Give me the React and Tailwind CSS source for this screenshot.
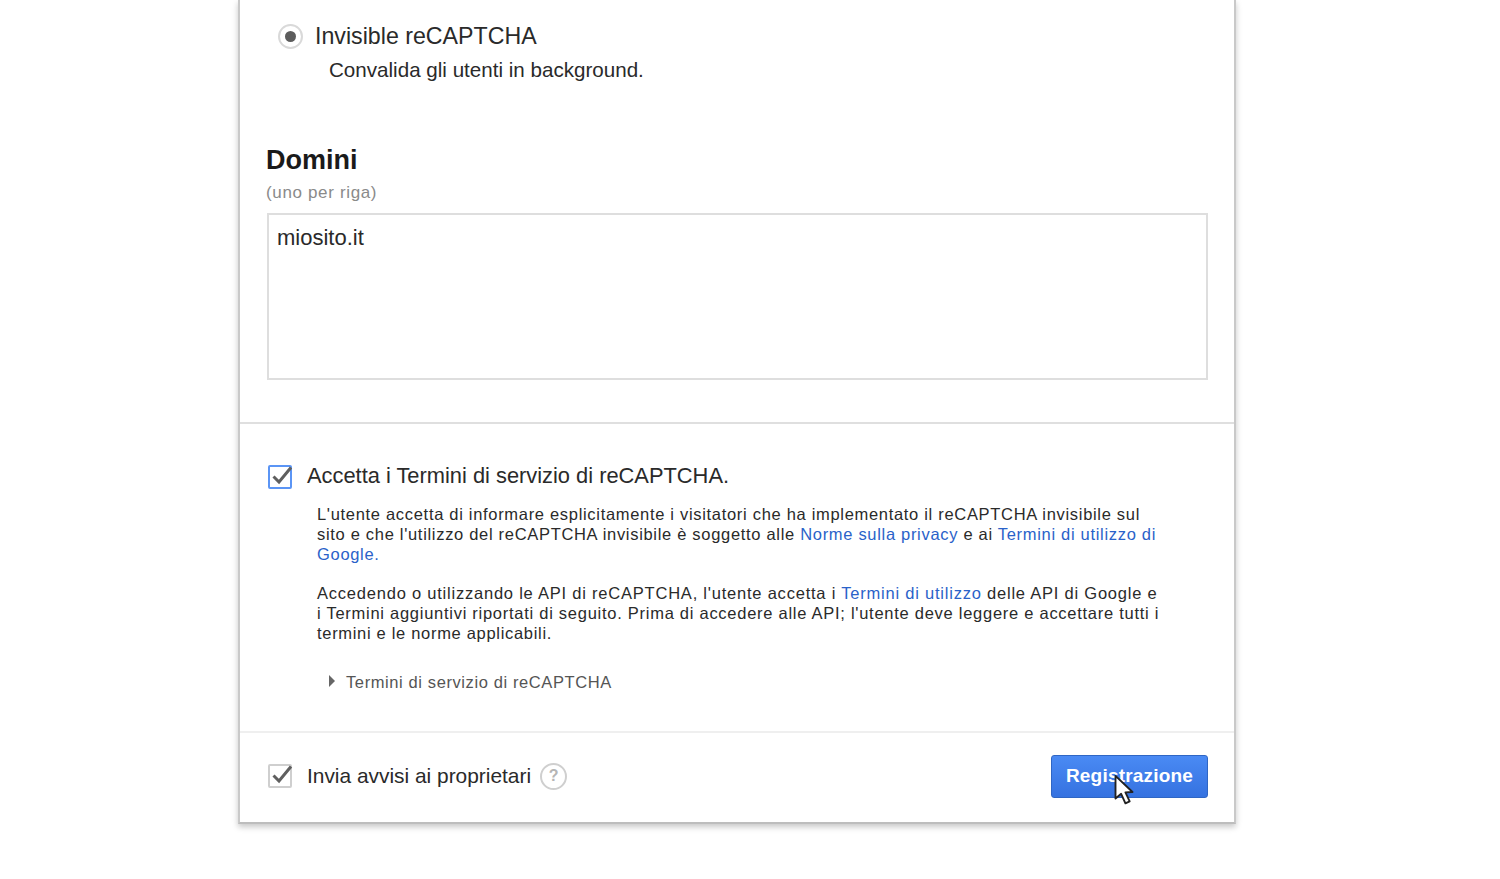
import React from 'react';

function Check({ className }) {
  return (
    <svg viewBox="0 0 24 24" className={className} fill="none">
      <path d="M4.5 12.5 L10 18 L22 3.5" stroke="#5f5f5f" strokeWidth="3" />
    </svg>
  );
}

export default function App() {
  return (
    <div className="h-[879px] overflow-hidden bg-white font-['Liberation_Sans',Arial,sans-serif] text-[#222]">
      <div className="ml-[238px] w-[998px] h-[824px] flex flex-col bg-white border-x-2 border-[#c9c9c9] border-b-2 border-b-[#bdbdbd] shadow-[0_3px_6px_rgba(0,0,0,0.22)]">
        {/* recaptcha type + domains */}
        <div className="h-[424px] shrink-0 pl-[26px] pr-[26px] pt-[21px] border-b-2 border-[#dfdfdf]">
          <div className="flex items-center h-[30px] pl-[12px]">
            <div className="w-[25px] h-[25px] rounded-full border-2 border-[#d9d9d9] flex items-center justify-center">
              <div className="w-[11px] h-[11px] rounded-full bg-[#5c5c5c]" />
            </div>
            <span className="ml-[12px] text-[23.2px] leading-[30px] text-[#2a2a2a]">Invisible reCAPTCHA</span>
          </div>
          <p className="mt-[5px] ml-[63px] text-[20.6px] leading-[28px] text-[#2a2a2a]">Convalida gli utenti in background.</p>
          <h2 className="mt-[59px] text-[27px] leading-[34px] font-bold text-[#1a1a1a]">Domini</h2>
          <p className="mt-[5px] text-[17px] leading-[22px] tracking-[0.65px] text-[#8a8a8a]">(uno per riga)</p>
          <div className="mt-[9px] ml-[1px] h-[167px] border-2 border-[#dedede] px-[8px] py-[8px] text-[22px] leading-[30px] text-[#2a2a2a]">miosito.it</div>
        </div>

        {/* terms */}
        <div className="h-[309px] shrink-0 border-b-2 border-[#efefef] pl-[28px] pr-[26px] pt-[37px]">
          <div className="flex items-center h-[30px]">
            <div className="relative w-[24px] h-[24px] mt-[2px] border-2 border-[#5b95f5] rounded-[2px]">
              <Check className="absolute left-[-1px] top-[-3px] w-[24px] h-[24px]" />
            </div>
            <span className="ml-[15px] text-[21.85px] leading-[30px] text-[#2a2a2a]">Accetta i Termini di servizio di reCAPTCHA.</span>
          </div>
          <div className="ml-[49px] mt-[13px] text-[16.5px] leading-[20.2px] tracking-[0.69px] text-[#2a2a2a] whitespace-nowrap">
            <p>L'utente accetta di informare esplicitamente i visitatori che ha implementato il reCAPTCHA invisibile sul</p>
            <p>sito e che l'utilizzo del reCAPTCHA invisibile è soggetto alle <a className="text-[#2a62c9]">Norme sulla privacy</a> e ai <a className="text-[#2a62c9]">Termini di utilizzo di</a></p>
            <p><a className="text-[#2a62c9]">Google.</a></p>
            <p className="mt-[18px] tracking-[0.78px]">Accedendo o utilizzando le API di reCAPTCHA, l'utente accetta i <a className="text-[#2a62c9]">Termini di utilizzo</a> delle API di Google e</p>
            <p className="tracking-[0.73px]">i Termini aggiuntivi riportati di seguito. Prima di accedere alle API; l'utente deve leggere e accettare tutti i</p>
            <p>termini e le norme applicabili.</p>
          </div>
          <div className="ml-[61px] mt-[29px] flex items-center h-[20px] text-[16.5px] tracking-[0.6px] text-[#555]">
            <div className="w-0 h-0 border-y-[6px] border-y-transparent border-l-[6px] border-l-[#666] mb-[2px]" />
            <span className="ml-[11px]">Termini di servizio di reCAPTCHA</span>
          </div>
        </div>

        {/* footer */}
        <div className="flex-1 flex items-center justify-between pl-[28px] pr-[26px] pb-[3px]">
          <div className="flex items-center">
            <div className="relative w-[24px] h-[24px] border-2 border-[#cfcfcf] rounded-[2px]">
              <Check className="absolute left-[-1px] top-[-3px] w-[24px] h-[24px]" />
            </div>
            <span className="ml-[15px] text-[20.9px] leading-[30px] text-[#2a2a2a]">Invia avvisi ai proprietari</span>
            <div className="ml-[9px] w-[27px] h-[27px] rounded-full border-2 border-[#cfcfcf] flex items-center justify-center text-[16px] font-bold text-[#b5b5b5]">?</div>
          </div>
          <button className="relative w-[157px] h-[43px] rounded-[3px] border border-[#2f66c4] bg-gradient-to-b from-[#4a8af4] to-[#3572e0] text-white text-[19px] tracking-[0.2px] font-bold">
            Registrazione
            <svg viewBox="0 0 24 36" className="absolute left-[60px] top-[18px] w-[24px] h-[34px]">
              <path d="M3 2 L3 26 L9 21 L13.5 31 L18 29 L13.5 19.5 L21 19 Z" fill="#fff" stroke="#222" strokeWidth="2" strokeLinejoin="round" />
            </svg>
          </button>
        </div>
      </div>
    </div>
  );
}
